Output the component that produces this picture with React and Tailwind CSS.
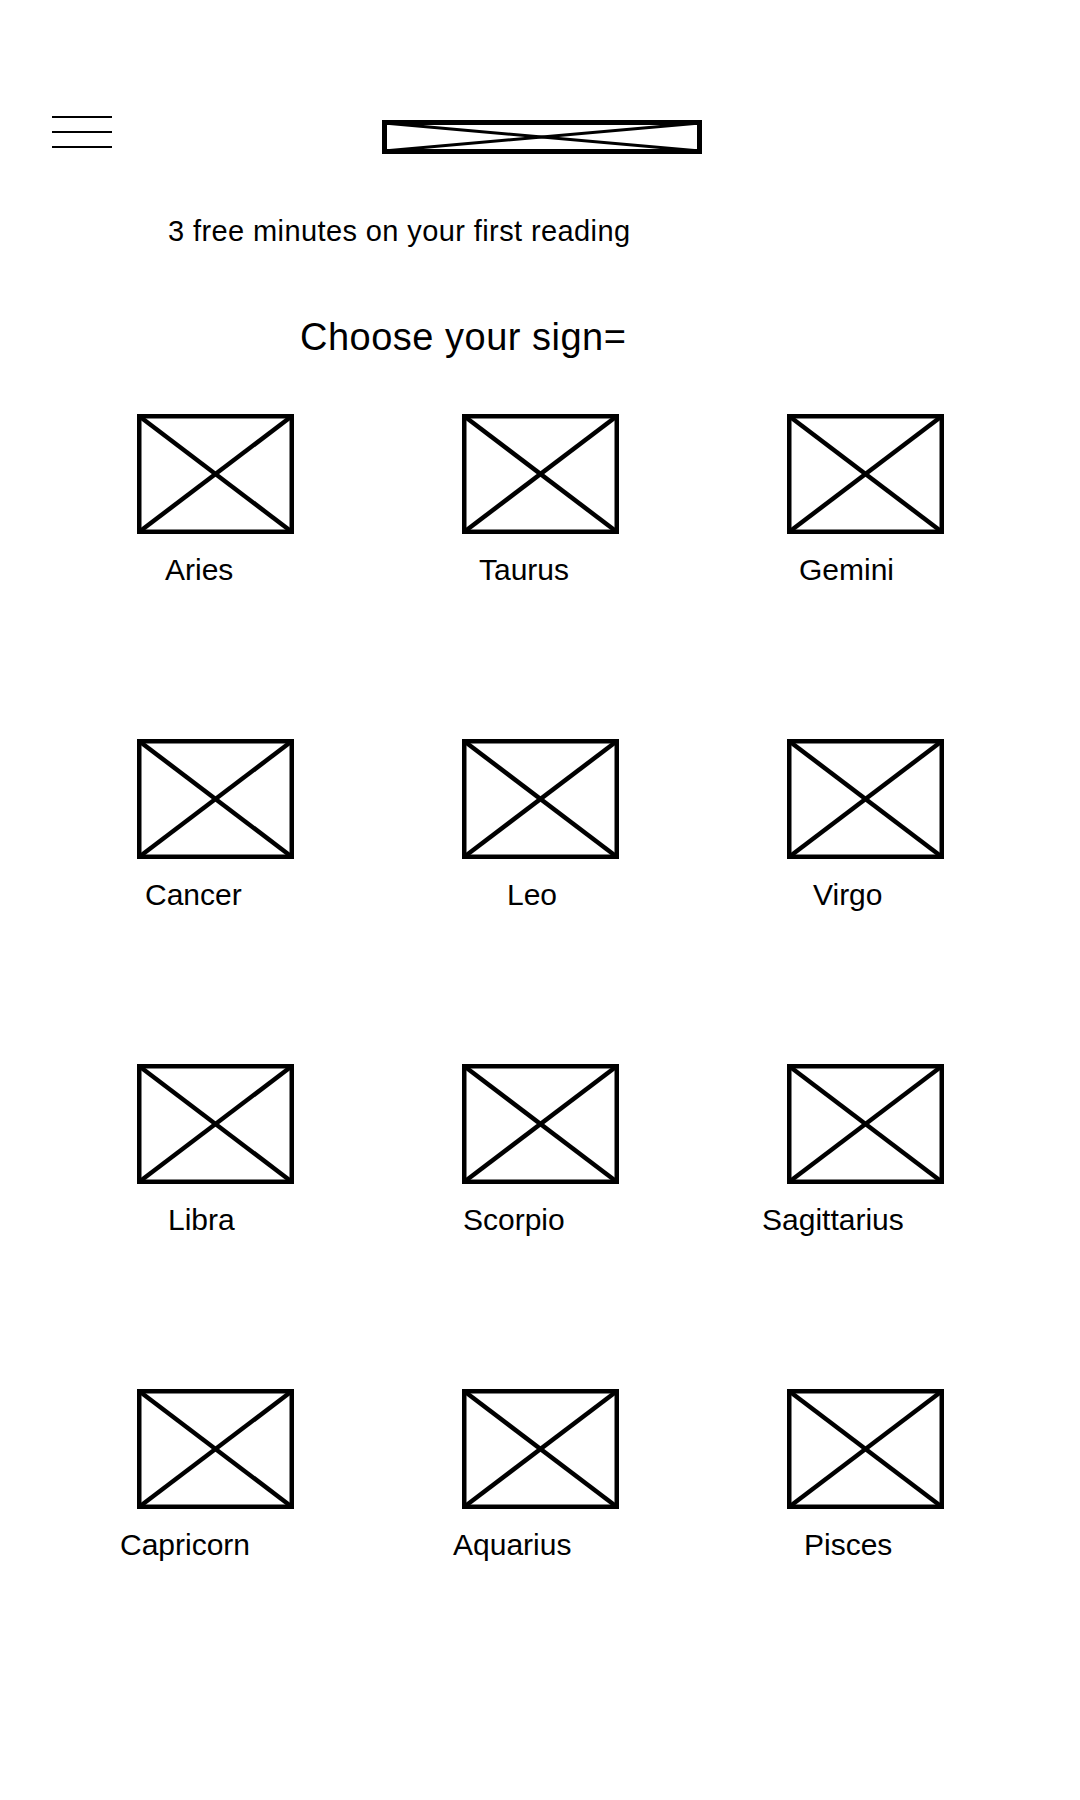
import React from "react";

// 12 signs, each with its label nudge relative to the box's left edge
const signs = [
  { name: "Aries", shift: "ml-[28px]" },
  { name: "Taurus", shift: "ml-[17px]" },
  { name: "Gemini", shift: "ml-[12px]" },
  { name: "Cancer", shift: "ml-[8px]" },
  { name: "Leo", shift: "ml-[45px]" },
  { name: "Virgo", shift: "ml-[26px]" },
  { name: "Libra", shift: "ml-[31px]" },
  { name: "Scorpio", shift: "ml-[1px]" },
  { name: "Sagittarius", shift: "ml-[-25px]" },
  { name: "Capricorn", shift: "ml-[-17px]" },
  { name: "Aquarius", shift: "ml-[-9px]" },
  { name: "Pisces", shift: "ml-[17px]" },
];

function Placeholder() {
  return (
    <svg width="157" height="120" viewBox="0 0 157 120" className="block">
      <rect x="2.25" y="2.25" width="152.5" height="115.5" fill="none" stroke="#000" strokeWidth="4.5" />
      <line x1="2" y1="2" x2="155" y2="118" stroke="#000" strokeWidth="4.5" />
      <line x1="155" y1="2" x2="2" y2="118" stroke="#000" strokeWidth="4.5" />
    </svg>
  );
}

export default function App() {
  return (
    <div className="min-h-[1800px] w-[1080px] bg-white text-black font-['Liberation_Sans',Arial,sans-serif]">
      {/* header: menu + logo placeholder */}
      <div className="flex items-start pt-[116px] pl-[52px]">
        <div className="flex w-[60px] flex-col gap-[13px]">
          <div className="h-[2px] bg-black" />
          <div className="h-[2px] bg-black" />
          <div className="h-[2px] bg-black" />
        </div>
        <svg width="320" height="34" viewBox="0 0 320 34" className="ml-[270px] mt-[4px] block">
          <rect x="2.5" y="2.5" width="315" height="29" fill="none" stroke="#000" strokeWidth="5" />
          <line x1="2" y1="3" x2="318" y2="31" stroke="#000" strokeWidth="3" />
          <line x1="318" y1="3" x2="2" y2="31" stroke="#000" strokeWidth="3" />
        </svg>
      </div>

      <p className="mt-[61px] pl-[168px] text-[29px] leading-[32px] tracking-[0.4px]">
        3 free minutes on your first reading
      </p>

      <h2 className="mt-[69px] pl-[300px] text-[38px] leading-[42px] tracking-[0.5px]">
        Choose your sign=
      </h2>

      <div className="mt-[56px] ml-[137px] grid grid-cols-[157px_157px_157px] gap-x-[168px] gap-y-[152px]">
        {signs.map((s) => (
          <div key={s.name} className="flex w-[157px] flex-col">
            <Placeholder />
            <span className={`mt-[19px] whitespace-nowrap text-[30px] leading-[34px] ${s.shift}`}>
              {s.name}
            </span>
          </div>
        ))}
      </div>
    </div>
  );
}
